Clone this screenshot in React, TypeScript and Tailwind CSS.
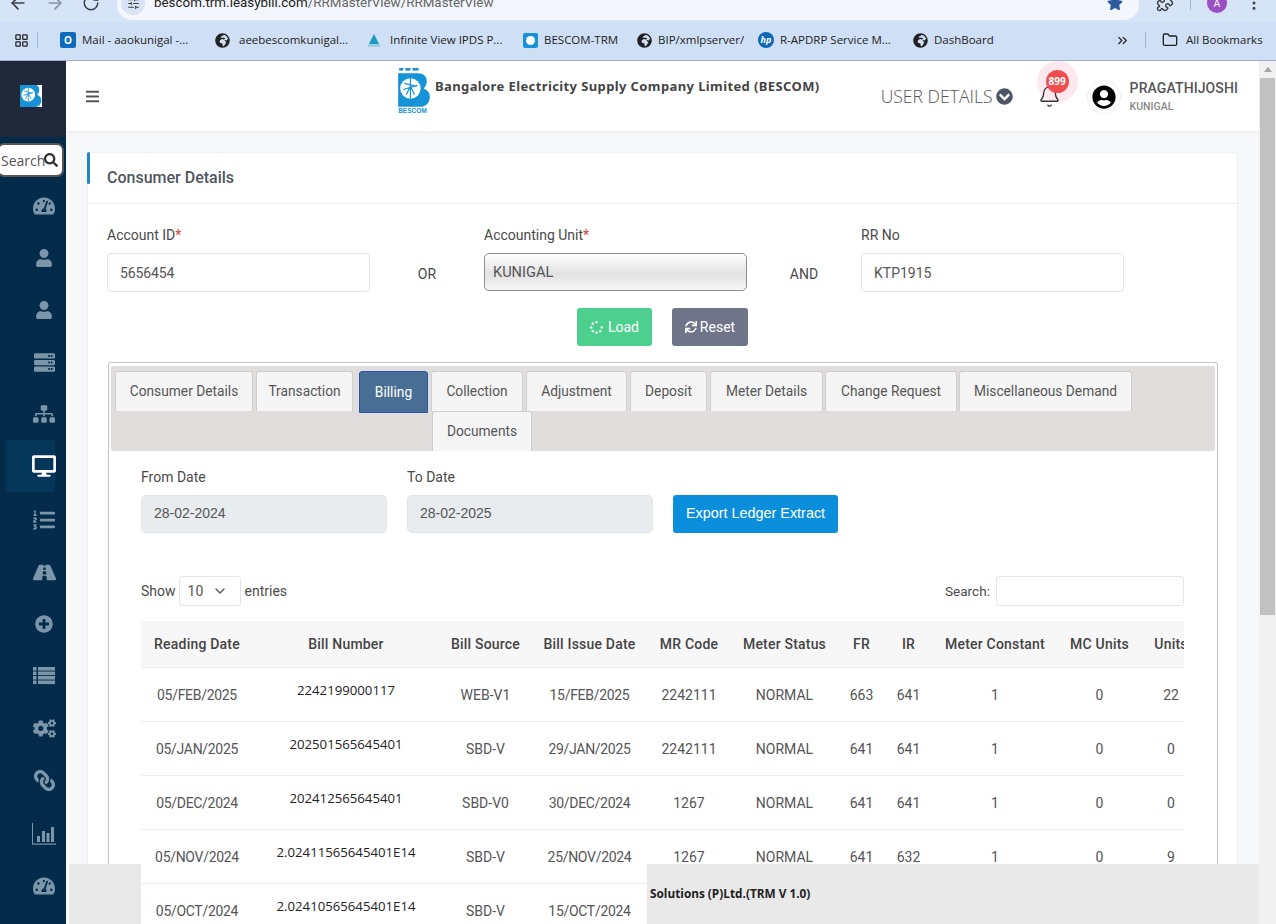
import React from "react";
import { ArrowLeft, ArrowRight, RotateCw, ChevronsRight, Folder, LayoutGrid, Puzzle, MoreVertical, ChevronDown, Bell, SlidersHorizontal } from "lucide-react";
import { FaTachometerAlt, FaUser, FaServer, FaSitemap, FaDesktop, FaListOl, FaRoad, FaPlusCircle, FaCogs, FaLink, FaChevronCircleDown, FaSync, FaSpinner, FaSearch, FaUserCircle, FaBars, FaStar, FaGlobeAfrica } from "react-icons/fa";

function BescomLogo({ small }: { small?: boolean }) {
  return (
    <svg viewBox="0 0 32 46" className={small ? "w-[22px] h-[22px]" : "w-[33px] h-[47px]"} preserveAspectRatio={small ? "xMidYMid slice" : "xMidYMid meet"}>
      {small && <rect width="32" height="46" fill="#fff" />}
      <rect x="1" y="1" width="4" height="2.5" fill="#1b8fd0" />
      <rect x="7" y="1" width="5" height="2.5" fill="#1b8fd0" />
      <rect x="14" y="1" width="6" height="2.5" fill="#1b8fd0" />
      <path d="M0 6h19c6 0 9 3 9 8 0 3-1 5-3 7 4 2 6 4 6 8 0 6-4 10-10 10H0z" fill="#1593d6" />
      <circle cx="12" cy="21" r="10" fill="#fff" />
      <path d="M12 11v20M6 16l12 3M5 22l14-4M8 27l4-8 4 8" stroke="#1593d6" strokeWidth="1.2" fill="none" />
      <text x="0" y="45.5" fontSize="6.4" fontWeight="700" fill="#1593d6" fontFamily="Liberation Sans, sans-serif">BESCOM</text>
    </svg>
  );
}

function BarChartIcon({ size, className }: { size: number; className?: string }) {
  return (
    <svg width={size} height={size} viewBox="0 0 24 24" className={className} fill="currentColor">
      <rect x="0" y="1" width="1" height="21" />
      <rect x="0" y="21.5" width="24" height="1.2" />
      <rect x="5" y="14" width="3" height="6" />
      <rect x="10" y="9" width="3" height="11" />
      <rect x="14.5" y="11" width="3" height="9" />
      <rect x="19" y="5" width="3" height="15" />
    </svg>
  );
}

function ListIcon({ size, className }: { size: number; className?: string }) {
  return (
    <svg width={size} height={size} viewBox="0 0 22 22" className={className} fill="currentColor">
      {[2, 6.5, 11, 15.5].map((y) => (
        <g key={y}>
          <rect x="0" y={y} width="3.5" height="3.6" />
          <rect x="5" y={y} width="17" height="3.6" />
        </g>
      ))}
    </svg>
  );
}

const navIcons = [
  { I: FaTachometerAlt, s: 22 },
  { I: FaUser, s: 18 },
  { I: FaUser, s: 18 },
  { I: FaServer, s: 21 },
  { I: FaSitemap, s: 22 },
  { I: FaDesktop, s: 24, active: true },
  { I: FaListOl, s: 22, gap: "mt-[2px]" },
  { I: FaRoad, s: 23 },
  { I: FaPlusCircle, s: 18 },
  { I: ListIcon, s: 22 },
  { I: FaCogs, s: 23 },
  { I: FaLink, s: 21, flip: true },
  { I: BarChartIcon, s: 24, gap: "mt-[2px]" },
  { I: FaTachometerAlt, s: 22 },
];

const bookmarks = [
  { t: "Mail - aaokunigal -...", ml: "ml-[22px]", w: "w-[110px]", gap: "gap-[6px]", icon: <span className="w-[16px] h-[16px] bg-[#0f6cbd] text-white text-[10px] font-bold flex items-center justify-center rounded-[2px]">O</span> },
  { t: "aeebescomkunigal...", ml: "ml-[23px]", w: "w-[106px]", gap: "gap-[9px]", icon: <FaGlobeAfrica size={15} className="text-[#222]" /> },
  { t: "Infinite View IPDS P...", ml: "ml-[22px]", w: "w-[111px]", gap: "gap-[9px]", icon: <svg width="14" height="14" viewBox="0 0 14 14"><path d="M7 1l5 10H2z" fill="#1c9bb8" /><rect x="1" y="11.5" width="12" height="2" fill="#8fc7d6" /></svg> },
  { t: "BESCOM-TRM", ml: "ml-[22px]", w: "w-[76px]", gap: "gap-[6px]", icon: <span className="w-[15px] h-[15px] bg-[#1593d6] rounded-[2px] flex items-center justify-center"><span className="w-[9px] h-[9px] bg-white rounded-full" /></span> },
  { t: "BIP/xmlpserver/", ml: "ml-[17px]", w: "w-[84px]", gap: "gap-[6px]", icon: <FaGlobeAfrica size={15} className="text-[#222]" /> },
  { t: "R-APDRP Service M...", ml: "ml-[16px]", w: "w-[114px]", gap: "gap-[6px]", icon: <span className="w-[16px] h-[16px] bg-[#0f68b5] rounded-full text-white italic text-[9px] font-bold flex items-center justify-center">hp</span> },
  { t: "DashBoard", ml: "ml-[19px]", w: "w-[58px]", gap: "gap-[6px]", icon: <FaGlobeAfrica size={15} className="text-[#222]" /> },
];

const tabs: { t: string; w: string; ml: string; active?: boolean }[] = [
  { t: "Consumer Details", w: "w-[138px]", ml: "ml-[4px]" },
  { t: "Transaction", w: "w-[97px]", ml: "ml-[3px]" },
  { t: "Billing", w: "w-[69px]", ml: "ml-[6px]", active: true },
  { t: "Collection", w: "w-[92px]", ml: "ml-[3px]" },
  { t: "Adjustment", w: "w-[101px]", ml: "ml-[3px]" },
  { t: "Deposit", w: "w-[77px]", ml: "ml-[3px]" },
  { t: "Meter Details", w: "w-[113px]", ml: "ml-[3px]" },
  { t: "Change Request", w: "w-[132px]", ml: "ml-[2px]" },
  { t: "Miscellaneous Demand", w: "w-[173px]", ml: "ml-[2px]" },
];

const cols = [
  { t: "Reading Date", w: "w-[112px]" },
  { t: "Bill Number", w: "w-[186px]" },
  { t: "Bill Source", w: "w-[93px]" },
  { t: "Bill Issue Date", w: "w-[115px]" },
  { t: "MR Code", w: "w-[84px]" },
  { t: "Meter Status", w: "w-[107px]" },
  { t: "FR", w: "w-[47px]" },
  { t: "IR", w: "w-[47px]" },
  { t: "Meter Constant", w: "w-[126px]" },
  { t: "MC Units", w: "w-[83px]" },
  { t: "Units", w: "w-[60px]" },
];

const rows = [
  ["05/FEB/2025", "2242199000117", "WEB-V1", "15/FEB/2025", "2242111", "NORMAL", "663", "641", "1", "0", "22"],
  ["05/JAN/2025", "202501565645401", "SBD-V", "29/JAN/2025", "2242111", "NORMAL", "641", "641", "1", "0", "0"],
  ["05/DEC/2024", "202412565645401", "SBD-V0", "30/DEC/2024", "1267", "NORMAL", "641", "641", "1", "0", "0"],
  ["05/NOV/2024", "2.02411565645401E14", "SBD-V", "25/NOV/2024", "1267", "NORMAL", "641", "632", "1", "0", "9"],
  ["05/OCT/2024", "2.02410565645401E14", "SBD-V", "15/OCT/2024", "1267", "NORMAL", "632", "620", "1", "0", "12"],
];

export default function App() {
  return (
    <div className="relative w-[1276px] h-[924px] overflow-hidden flex flex-col bg-white font-[Roboto,sans-serif] text-[14px] text-[#555]">
      {/* browser chrome */}
      <div className="h-[61px] shrink-0 bg-[#cfdff6] border-b border-[#9fb0c8] font-['Open_Sans',sans-serif] overflow-hidden">
        <div className="h-[22px] overflow-hidden bg-[#d6e4f8]">
          <div className="-mt-[10px] h-[30px] flex text-[#3c4043]">
            <ArrowLeft size={20} className="ml-[8px] mt-[3px]" />
            <ArrowRight size={20} className="ml-[17px] mt-[3px] text-[#8a94a4]" />
            <RotateCw size={18} className="ml-[17px] mt-[4px]" />
            <div className="ml-[17px] w-[1022px] h-[30px] bg-[#f3f6fc] rounded-[18px] flex items-start">
              <span className="ml-[4px] mt-[1px] w-[24px] h-[24px] rounded-full bg-[#d8e3f3] flex items-center justify-center"><SlidersHorizontal size={13} /></span>
              <span className="ml-[9px] leading-[26px] text-[13.4px] text-[#222] font-[Roboto,sans-serif]">bescom.trm.ieasybill.com<span className="text-[#666]">/RRMasterView/RRMasterView</span></span>
              <FaStar size={16} className="ml-auto mr-[16px] mt-[5px] text-[#2f5a9e]" />
            </div>
            <Puzzle size={18} className="ml-[17px] mt-[4px]" />
            <span className="ml-[16px] mt-[4px] w-px h-[16px] bg-[#9db7dc]" />
            <span className="ml-[16px] mt-[3px] w-[20px] h-[20px] rounded-full bg-[#9c4fc4] text-white text-[10px] flex items-center justify-center">A</span>
            <MoreVertical size={18} className="ml-[18px] mt-[4px]" />
          </div>
        </div>
        <div className="h-[38px] flex items-center text-[11.5px] text-[#222] pb-[2px]">
          <LayoutGrid size={15} className="ml-[14px] text-[#222]" />
          <span className="ml-[8px] w-px h-[16px] bg-[#9db7dc]" />
          {bookmarks.map((b, i) => (
            <div key={i} className={`flex items-center ${b.gap} ${b.ml}`}>
              {b.icon}
              <span className={`${b.w} whitespace-nowrap`}>{b.t}</span>
            </div>
          ))}
          <ChevronsRight size={15} className="ml-[123px]" />
          <span className="ml-[15px] w-px h-[16px] bg-[#9db7dc]" />
          <Folder size={16} className="ml-[16px]" />
          <span className="ml-[8px] whitespace-nowrap">All Bookmarks</span>
        </div>
      </div>

      <div className="flex-1 flex min-h-0">
        {/* sidebar */}
        <aside className="w-[66px] shrink-0 bg-[#042b4a] flex flex-col">
          <div className="h-[76px] bg-[#20293a] flex items-center pl-[20px] pb-[6px]">
            <BescomLogo small />
          </div>
          <div className="-ml-[3px] mt-[6px] w-[67px] h-[34px] bg-white border-2 border-[#555] rounded-[7px] flex items-center pl-[2px] text-[14px] text-[#555] font-['Open_Sans',sans-serif] overflow-hidden">
            <span>Search</span>
            <FaSearch size={14} className="-ml-[1px] shrink-0 text-[#333]" />
          </div>
          <div className="mt-[3px] flex flex-col">
            {navIcons.map(({ I, s, active, gap, flip }, i) => (
              <div key={i} className={`h-[52px] w-[49px] ml-[6px] flex items-center justify-center pl-[27px] ${gap ?? ""} ${active ? "bg-[#04365a]" : ""}`}>
                <I size={s} className={`shrink-0 ${active ? "text-white" : "text-[#7b95a9]"} ${flip ? "-scale-x-100" : ""}`} />
              </div>
            ))}
          </div>
        </aside>

        {/* main */}
        <main className="relative flex-1 min-w-0 bg-[#f7f8fa] overflow-hidden flex flex-col">
          <header className="h-[70px] shrink-0 bg-white shadow-[0_1px_4px_rgba(0,0,0,0.06)] flex items-start">
            <FaBars size={15} className="ml-[19px] mt-[28px] text-[#555]" />
            <div className="ml-[298px] mt-[6px] w-[33px]"><BescomLogo /></div>
            <div className="ml-[4px] mt-[15px] font-['Noto_Sans',sans-serif] font-bold text-[13px] leading-[20px] text-[#444] tracking-[0.39px] whitespace-nowrap">Bangalore Electricity Supply Company Limited (BESCOM)</div>
            <div className="ml-[61px] mt-[23px] flex items-center font-['Open_Sans',sans-serif] text-[17.6px] leading-[24px] font-light text-[#555] whitespace-nowrap">
              USER DETAILS
              <FaChevronCircleDown size={17} className="ml-[3px] text-[#4f5668]" />
            </div>
            <div className="relative ml-[25px] mt-[24px] w-[22px] h-[24px]">
              <span className="absolute -top-[24px] -left-[1px] w-[41px] h-[41px] rounded-full bg-[#fde8ef]" />
              <Bell size={23} strokeWidth={1.4} className="relative text-[#333]" />
              <span className="absolute -top-[15px] left-[8px] w-[23px] h-[23px] rounded-full bg-[#f04e4e] text-white text-[10px] font-bold flex items-center justify-center font-['Open_Sans',sans-serif]">899</span>
            </div>
            <div className="ml-[27px] mt-[19px] w-[34px] h-[34px] rounded-full bg-white border border-[#eee] flex items-center justify-center">
              <FaUserCircle size={24} className="text-black" />
            </div>
            <div className="ml-[9px] mt-[17px] whitespace-nowrap">
              <div className="text-[14px] leading-[20px] font-medium tracking-[0.1px] text-[#555]">PRAGATHIJOSHI</div>
              <div className="text-[10.5px] leading-[14px] mt-[2px] font-medium text-[#888]">KUNIGAL</div>
            </div>
          </header>

          <section className="relative ml-[21px] mr-[21px] mt-[21px] bg-white border border-[#eeeff2] rounded-[3px]">
            <span className="absolute -left-px -top-px w-[3px] h-[32px] bg-[#1e88c7] rounded-[2px]" />
            <div className="h-[51px] border-b border-[#eceef1] pl-[19px] pb-[1px] flex items-center text-[16px] font-medium text-[#4f5561]">Consumer Details</div>

            <div className="pl-[19px] pr-[19px] pt-[22px]">
              <div className="flex items-start">
                <div className="w-[263px]">
                  <div className="leading-[18px] text-[#4a4a4a]">Account ID<span className="text-[#e03a3a]">*</span></div>
                  <div className="mt-[9px] h-[39px] bg-white border border-[#e1e4e8] rounded-[4px] flex items-center pl-[12px] pt-[2px] text-[#555] tracking-[-0.1px]">5656454</div>
                </div>
                <div className="w-[114px] pt-[38px] text-center leading-[20px] text-[#4a4a4a]">OR</div>
                <div className="w-[263px]">
                  <div className="leading-[18px] text-[#4a4a4a]">Accounting Unit<span className="text-[#e03a3a]">*</span></div>
                  <div className="mt-[9px] h-[38px] bg-[linear-gradient(180deg,#ffffff_0%,#e2e2e2_55%,#f6f6f6_100%)] border border-[#8d8d8d] rounded-[5px] flex items-center pl-[8px] pt-[1px] text-[14.6px] text-[#555]">KUNIGAL</div>
                </div>
                <div className="w-[114px] pt-[38px] text-center leading-[20px] text-[#4a4a4a]">AND</div>
                <div className="w-[263px]">
                  <div className="leading-[18px] text-[#4a4a4a]">RR No</div>
                  <div className="mt-[9px] h-[39px] bg-white border border-[#e1e4e8] rounded-[4px] flex items-center pl-[12px] pt-[2px] text-[#555]">KTP1915</div>
                </div>
              </div>

              <div className="mt-[16px] flex pl-[470px] gap-[20px]">
                <div className="w-[75px] h-[38px] bg-[#4dcf8e] text-white rounded-[3px] flex items-center justify-center gap-[5px]"><FaSpinner size={13} />Load</div>
                <div className="w-[76px] h-[38px] bg-[#6f7489] text-white rounded-[3px] flex items-center justify-center gap-[3px]"><FaSync size={12} />Reset</div>
              </div>

              {/* tab panel */}
              <div className="mt-[16px] ml-px w-[1110px] border border-[#c4c4c4] rounded-[2px] px-[2px] pt-[3px]">
                <div className="h-[85px] bg-[#e0dddc] rounded-[2px] pt-[5px] text-[13.75px]">
                  <div className="flex">
                    {tabs.map((t) => (
                      <div
                        key={t.t}
                        className={`${t.w} ${t.ml} shrink-0 text-center rounded-t-[3px] border ${t.active ? "h-[42px] bg-[#4a6f96] border-[#2a56a8] text-white leading-[40px]" : "h-[40px] bg-[#f5f5f5] border-[#cfcfcf] border-b-0 leading-[38px] text-[#555]"}`}
                      >
                        {t.t}
                      </div>
                    ))}
                  </div>
                  <div className="-mt-[2px] ml-[321px] w-[100px] h-[40px] bg-[#f5f5f5] border border-[#cfcfcf] border-b-0 rounded-t-[3px] text-center leading-[38px] text-[#555]">Documents</div>
                </div>

                <div className="pl-[30px] pr-[31px] pt-[17px]">
                  <div className="flex items-end gap-[20px]">
                    <div className="w-[246px]">
                      <div className="leading-[18px] text-[#4a4a4a]">From Date</div>
                      <div className="mt-[9px] h-[38px] bg-[#e9ecef] border border-[#e1e4e8] rounded-[5px] flex items-center pl-[12px] pb-[2px] font-['Liberation_Sans',sans-serif] text-[#555]">28-02-2024</div>
                    </div>
                    <div className="w-[246px]">
                      <div className="leading-[18px] text-[#4a4a4a]">To Date</div>
                      <div className="mt-[9px] h-[38px] bg-[#e9ecef] border border-[#e1e4e8] rounded-[5px] flex items-center pl-[12px] pb-[2px] font-['Liberation_Sans',sans-serif] text-[#555]">28-02-2025</div>
                    </div>
                    <div className="w-[165px] h-[38px] bg-[#0b8fdc] text-white rounded-[3px] flex items-center justify-center text-[14.4px] font-['Liberation_Sans',sans-serif]">Export Ledger Extract</div>
                  </div>

                  <div className="mt-[43px] flex items-center h-[30px]">
                    <span className="text-[#4a4a4a]">Show</span>
                    <div className="ml-[3px] w-[62px] h-[30px] border border-[#e3e5e8] rounded-[3px] flex items-center pl-[8px] text-[#555]">10<ChevronDown size={16} className="ml-[9px]" /></div>
                    <span className="ml-[4px] text-[#4a4a4a]">entries</span>
                    <span className="ml-auto text-[13.6px] text-[#4a4a4a]">Search:</span>
                    <div className="ml-[6px] w-[188px] h-[30px] border border-[#e3e5e8] rounded-[3px] bg-white" />
                  </div>

                  <div className="mt-[15px] overflow-hidden w-[1043px]">
                    <table className="table-fixed border-collapse w-[1060px]">
                      <thead>
                        <tr className="h-[46px] bg-[#f7f7f7] border-b border-[#eeeeee]">
                          {cols.map((c, i) => (
                            <th key={c.t} className={`${c.w} font-medium tracking-[0.2px] text-[#444] text-center whitespace-nowrap p-0 pt-[2px] ${i < 4 ? "relative z-20" : ""}`}>{c.t}</th>
                          ))}
                        </tr>
                      </thead>
                      <tbody>
                        {rows.map((r) => (
                          <tr key={r[0]} className="h-[54px] border-b border-[#eeeeee]">
                            {r.map((v, i) => (
                              <td key={i} className={`p-0 text-center whitespace-nowrap ${i < 4 ? "relative z-20 bg-white" : ""}`}>
                                {i === 1 ? (
                                  <span className="block mb-[6px] text-[13.2px] text-[#222] font-['Open_Sans',sans-serif]">{v}</span>
                                ) : i === 0 || i === 3 ? (
                                  <span className="block pt-[3px] tracking-[-0.3px]">{v}</span>
                                ) : (
                                  <span className="block pt-[3px]">{v}</span>
                                )}
                              </td>
                            ))}
                          </tr>
                        ))}
                      </tbody>
                    </table>
                  </div>
                </div>
              </div>
            </div>
          </section>

          <footer className="absolute left-[3px] right-0 bottom-0 h-[60px] z-10 bg-[#e9e9e9] flex items-center pl-[581px] text-[11.8px] font-bold text-[#222] font-['Open_Sans',sans-serif]">
            Solutions (P)Ltd.(TRM V 1.0)
          </footer>
        </main>

        {/* page scrollbar */}
        <div className="w-[17px] shrink-0 bg-[#f1f1f1] flex flex-col items-center">
          <div className="h-[17px] flex items-center justify-center"><span className="w-0 h-0 border-x-[4px] border-x-transparent border-b-[5px] border-b-[#a3a3a3]" /></div>
          <div className="w-[15px] h-[537px] bg-[#c1c1c1]" />
        </div>
      </div>
    </div>
  );
}
